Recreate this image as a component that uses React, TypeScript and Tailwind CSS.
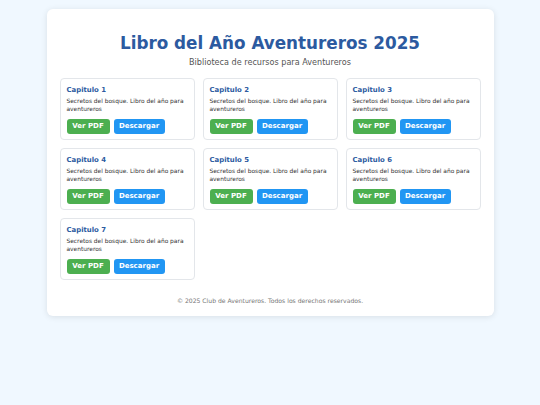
const chapters = [1, 2, 3, 4, 5, 6, 7];

function ChapterCard({ n }: { n: number }) {
  return (
    <div className="rounded-[4px] border border-[#e3e6ea] bg-white px-[6px] pt-[6px] h-[62px]">
      <h3 className="text-[6.9px] font-bold leading-[10px] text-[#2c5aa0]">Capitulo {n}</h3>
      <p className="mt-[3px] text-[5.9px] leading-[7.5px] text-[#333]">
        Secretos del bosque. Libro del año para aventureros
      </p>
      <div className="mt-[6px] flex gap-[4px]">
        <button className="h-[15px] w-[43px] rounded-[3px] bg-[#4caf50] text-[7px] font-bold text-white">
          Ver PDF
        </button>
        <button className="h-[15px] w-[51px] rounded-[3px] bg-[#2196f3] text-[7px] font-bold text-white">
          Descargar
        </button>
      </div>
    </div>
  );
}

export default function App() {
  return (
    <div
      className="min-h-[405px] bg-[#f0f8ff] pt-[9px]"
      style={{ fontFamily: '"DejaVu Sans", Verdana, sans-serif' }}
    >
      <div className="mx-auto w-[447px] h-[307px] rounded-[6px] bg-white px-[13px] pt-[22px] shadow-[0_1px_6px_rgba(0,0,0,0.1)]">
        <h1 className="text-center text-[16.8px] font-bold leading-[24px] text-[#2c5aa0]">
          Libro del Año Aventureros 2025
        </h1>
        <p className="mt-[1px] text-center text-[8.1px] leading-[12px] text-[#555]">
          Biblioteca de recursos para Aventureros
        </p>
        <div className="mt-[10px] grid grid-cols-3 gap-x-[8px] gap-y-[8px]">
          {chapters.map((n) => (
            <ChapterCard key={n} n={n} />
          ))}
        </div>
        <p className="mt-[16px] text-center text-[6.1px] text-[#777]">
          © 2025 Club de Aventureros. Todos los derechos reservados.
        </p>
      </div>
    </div>
  );
}
